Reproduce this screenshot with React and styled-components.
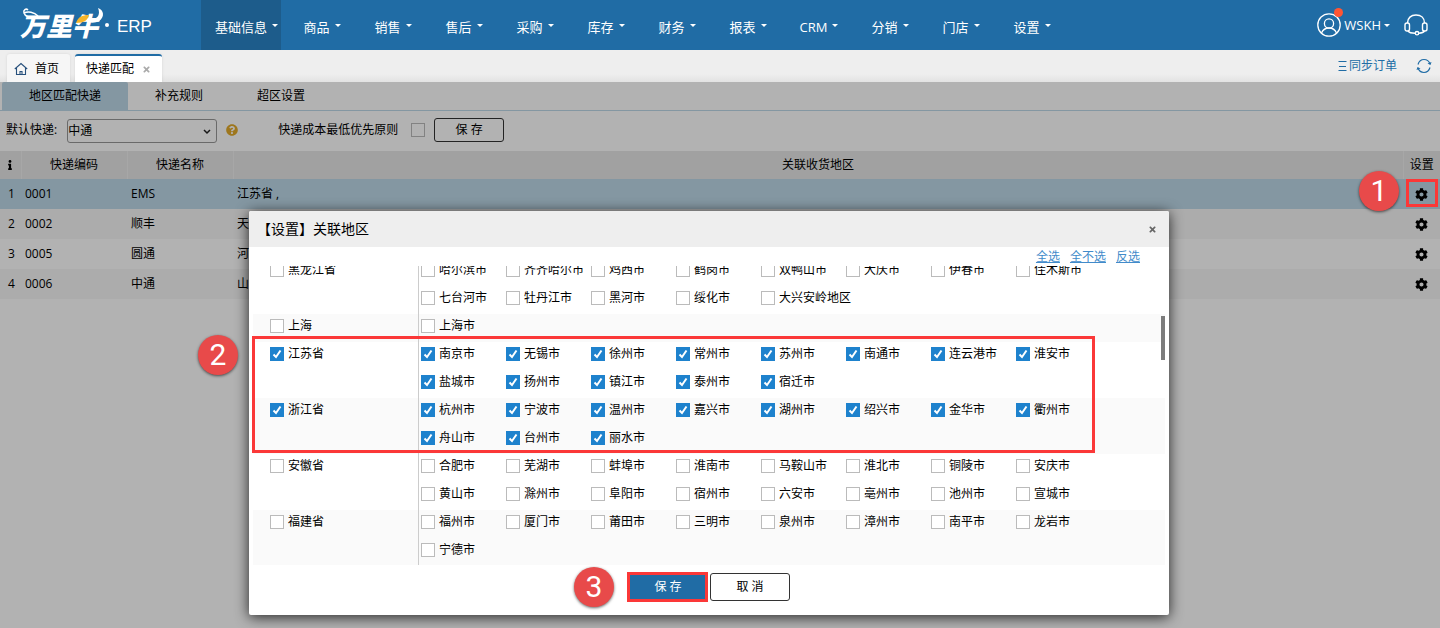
import React, { useEffect, useRef, useState } from "react";
import styled, { createGlobalStyle } from "styled-components";
import { FaCog, FaInfo, FaQuestionCircle, FaTimes } from "react-icons/fa";

function App() {
  return (
    <Page>
      <GlobalStyle />
      <TopBar />
      <PageTabs />

      <Content>
        <SubTabs>
          {subTabs.map((name, i) => (
            <SubTab key={name} $active={i === 0}>
              {name}
            </SubTab>
          ))}
        </SubTabs>
        <Toolbar />
        <ExpressTable />

        <Overlay>
          <AreaDialog />
        </Overlay>
      </Content>
    </Page>
  );
}

export default App;

function TopBar() {
  return (
    <Header>
      <Brand>
        <BrandName>万里牛</BrandName>
        <BrandArt viewBox="0 0 90 32" width="90" height="32">
          <path
            d="M13 10 C9 11 5 9 4 6 C3 3 6 1 8 3 M4 6 C8 4 14 5 18 9"
            fill="none"
            stroke="#fff"
            strokeWidth="1.5"
          />
          <path d="M78 1 C84 3 85 10 79 14 C76 16 71 16 68 15 L70 12 C77 13 81 8 78 1 Z" fill="#fff" />
          <path d="M56 16 C58 10 62 8 69 8 C68 13 64 16 56 16 Z" fill="#f5b52a" />
        </BrandArt>
        <BrandDot />
        <BrandSuffix>ERP</BrandSuffix>
      </Brand>

      <Nav>
        {menus.map((name, i) => (
          <NavItem key={name} $active={i === 0}>
            {name}
            <Caret />
          </NavItem>
        ))}
      </Nav>

      <UserArea>
        <Avatar>
          <svg viewBox="0 0 24 24" width="24" height="24" fill="none" stroke="#fff" strokeWidth="1.3">
            <circle cx="12" cy="12" r="11.2" />
            <circle cx="12" cy="10.5" r="4.6" />
            <path d="M4.5 20 C6 16.5 8.5 15 12 15 C15.500 15 18 16.500 19.500 20" />
          </svg>
          <RedDot />
        </Avatar>
        <UserButton>
          WSKH
          <Caret />
        </UserButton>
        <IconButton aria-label="客服">
          <svg viewBox="0 0 24 24" width="24" height="24" fill="none" stroke="#fff" strokeWidth="1.4">
            <path d="M3.500 10 C3.500 5 7 2 12 2 C17 2 20.500 5 20.500 10" />
            <rect x="1" y="10" width="4.500" height="8" rx="2" />
            <rect x="18.500" y="10" width="4.500" height="8" rx="2" />
            <path d="M4 18 C5 19.500 7 20.200 11 20.200" />
            <circle cx="13" cy="20.200" r="1.700" />
            <path d="M15 20.200 C17.500 20 19.500 19.500 20.500 18" />
          </svg>
        </IconButton>
      </UserArea>
    </Header>
  );
}

function PageTabs() {
  return (
    <TabBar>
      <PageTab>
        <svg viewBox="0 0 14 14" width="14" height="14" fill="none" stroke="#27507c" strokeWidth="1.1">
          <path d="M0.800 7 L7 1.500 L13.200 7 M2.500 6 V12.500 H11.500 V6" />
          <path d="M6 12.500 V9.500 H8 V12.500" />
        </svg>
        首页
      </PageTab>
      <PageTab $active>
        快递匹配
        <FaTimes size={9} color="#aaa" />
      </PageTab>

      <TabTools>
        <SyncButton>
          <svg viewBox="0 0 9 10" width="9" height="10" stroke="#206ca5" strokeWidth="1">
            <path d="M0.500 0.500 H8.500 M1 5.500 H8 M0.500 9.500 H8.500" />
          </svg>
          同步订单
        </SyncButton>
        <IconButton aria-label="刷新">
          <svg viewBox="0 0 16 16" width="16" height="16" fill="none" stroke="#206ca5" strokeWidth="1.200">
            <path d="M2 6.500 C3 3.200 5.300 1.500 8 1.500 C10.800 1.500 13 3 14 6" />
            <path d="M14 9.500 C13 12.800 10.700 14.500 8 14.500 C5.200 14.500 3 13 2 10" />
            <path d="M11.500 5.500 L14.500 7 L15.500 4 Z M4.500 10.500 L1.500 9 L0.500 12 Z" fill="#206ca5" stroke="none" />
          </svg>
        </IconButton>
      </TabTools>
    </TabBar>
  );
}

function Toolbar() {
  return (
    <ToolRow>
      <label htmlFor="default-express">默认快递:</label>
      <SelectWrap>
        <Select id="default-express" defaultValue="中通">
          <option>中通</option>
        </Select>
        <svg viewBox="0 0 8 6" width="8" height="6" fill="none" stroke="#222" strokeWidth="1.500">
          <path d="M1 1 L4 4 L7 1" />
        </svg>
      </SelectWrap>
      <FaQuestionCircle size={12} color="#e2ab2c" />
      <PriorityLabel>
        快递成本最低优先原则
        <Checkbox type="checkbox" />
      </PriorityLabel>
      <Button $small>保 存</Button>
    </ToolRow>
  );
}

function ExpressTable() {
  return (
    <Table>
      <colgroup>
        <col width="21" />
        <col width="106" />
        <col width="106" />
        <col />
        <col width="37" />
      </colgroup>
      <thead>
        <tr>
          <th>
            <FaInfo size={10} />
          </th>
          <th>快递编码</th>
          <th>快递名称</th>
          <th>关联收货地区</th>
          <th>设置</th>
        </tr>
      </thead>
      <tbody>
        {expressList.map((item, i) => (
          <Row key={item.code} $selected={i === 0}>
            <td>{i + 1}</td>
            <td>{item.code}</td>
            <td>{item.name}</td>
            <td>{item.area}</td>
            <SettingCell>
              <IconButton aria-label="设置">
                <FaCog size={13} color="#000" />
              </IconButton>
              {i === 0 && (
                <>
                  <GearFrame />
                  <GearBadge>1</GearBadge>
                </>
              )}
            </SettingCell>
          </Row>
        ))}
      </tbody>
    </Table>
  );
}

function AreaDialog() {
  const listRef = useRef();

  useEffect(() => {
    listRef.current.scrollTop = 8;
  }, []);

  return (
    <Dialog role="dialog" aria-labelledby="dialog-title">
      <DialogHead>
        <h2 id="dialog-title">【设置】关联地区</h2>
        <IconButton aria-label="关闭">
          <FaTimes size={9} color="#666" />
        </IconButton>
      </DialogHead>

      <SelectLinks>
        <a href="#all">全选</a>
        <a href="#none">全不选</a>
        <a href="#invert">反选</a>
      </SelectLinks>

      <AreaList ref={listRef}>
        {areaList.map((item) => (
          <Area item={item} key={item.province} />
        ))}
      </AreaList>
      <ScrollThumb />

      <DialogFoot>
        <FootAction>
          <Button $primary>保 存</Button>
          <SaveFrame />
          <SaveBadge>3</SaveBadge>
        </FootAction>
        <Button>取 消</Button>
      </DialogFoot>

      <AreaFrame />
      <AreaBadge>2</AreaBadge>
    </Dialog>
  );
}

function Area({ item }) {
  return (
    <AreaRow>
      <Province>
        <CheckItem name={item.province} checked={item.checked} />
      </Province>
      <Cities>
        {item.cities.map((city) => (
          <CheckItem name={city} checked={item.checked} key={city} />
        ))}
      </Cities>
    </AreaRow>
  );
}

function CheckItem({ name, checked = false }) {
  const [on, setOn] = useState(checked);

  return (
    <CheckLabel>
      <Checkbox type="checkbox" checked={on} onChange={() => setOn((prev) => !prev)} />
      {name}
    </CheckLabel>
  );
}

const GlobalStyle = createGlobalStyle`
  * {
    box-sizing: border-box;
  }

  body {
    margin: 0;
    color: #000;
    font-family: "Open Sans", "Noto Sans CJK SC", sans-serif;
    font-size: 12px;
    line-height: 16px;
  }

  button, select, input {
    font: inherit;
    color: inherit;
    margin: 0;
  }

  svg {
    flex: none;
    display: block;
  }
`;

const Page = styled.div`
  min-height: 100vh;
  display: flex;
  flex-direction: column;
`;

const Header = styled.header`
  height: 50px;
  display: flex;
  background: #206ca5;
  color: #fff;
`;

const Brand = styled.div`
  position: relative;
  width: 201px;
  flex: none;
  padding-left: 20px;
  display: flex;
  align-items: center;
`;

const BrandName = styled.span`
  width: 85px;
  font-family: "Noto Sans CJK SC", sans-serif;
  font-size: 26px;
  font-weight: 900;
  font-style: italic;
  line-height: 50px;
`;

const BrandArt = styled.svg`
  position: absolute;
  left: 20px;
  top: 7px;
`;

const BrandDot = styled.i`
  width: 4px;
  height: 4px;
  margin-right: 8px;
  border-radius: 50%;
  background: #fff;
`;

const BrandSuffix = styled.span`
  font-family: "Liberation Sans", sans-serif;
  font-size: 17px;
  line-height: 20px;
  padding-top: 4px;
`;

const Nav = styled.nav`
  flex: 1;
  display: flex;
`;

const NavItem = styled.button`
  min-width: ${(p) => (p.$active ? "80px" : "71px")};
  padding: 4px 2px 0 13px;
  display: flex;
  align-items: center;
  justify-content: center;
  gap: 5px;
  border: 0;
  background: ${(p) => (p.$active ? "#1d5c8b" : "transparent")};
  font-size: 13px;
  white-space: nowrap;
  cursor: pointer;
`;

const Caret = styled.i`
  margin-bottom: 4px;
  border: 3px solid transparent;
  border-top-color: #fff;
  border-bottom: 0;
`;

const UserArea = styled.div`
  display: flex;
  align-items: center;
  padding-right: 12px;
`;

const Avatar = styled.div`
  position: relative;
  margin-right: 3px;
`;

const RedDot = styled.i`
  position: absolute;
  top: -5px;
  right: -2px;
  width: 9px;
  height: 9px;
  border-radius: 50%;
  background: #ff5533;
`;

const UserButton = styled.button`
  display: flex;
  align-items: center;
  gap: 3px;
  margin-right: 14px;
  padding: 0;
  border: 0;
  background: none;
  font-size: 13px;

  ${Caret} {
    margin-bottom: 0;
  }
`;

const IconButton = styled.button`
  padding: 0;
  border: 0;
  background: none;
  cursor: pointer;
`;

const TabBar = styled.div`
  height: 32px;
  padding: 4px 8px 0 7px;
  display: flex;
  gap: 5px;
  background: linear-gradient(#eee 75%, #e2e2e2);
`;

const PageTab = styled.button`
  display: flex;
  align-items: center;
  gap: ${(p) => (p.$active ? "8px" : "7px")};
  padding: ${(p) => (p.$active ? "0 11px" : "0 11px 0 7px")};
  border: 0;
  border-top: 2px solid ${(p) => (p.$active ? "#206ca5" : "#f6f6f6")};
  border-radius: 3px 3px 0 0;
  background: ${(p) => (p.$active ? "#fff" : "#f6f6f6")};
  box-shadow: 0 0 3px rgba(0, 0, 0, 0.1);
`;

const TabTools = styled.div`
  margin-left: auto;
  padding-bottom: 4px;
  display: flex;
  align-items: center;
  gap: 19px;
`;

const SyncButton = styled.button`
  display: flex;
  align-items: center;
  gap: 2px;
  padding: 0;
  border: 0;
  background: none;
  color: #206ca5;
`;

const Content = styled.main`
  position: relative;
  flex: 1;
  background: #fff;
`;

const SubTabs = styled.div`
  height: 29px;
  padding-left: 2px;
  display: flex;
  border-bottom: 1px solid #bdd8e9;
`;

const SubTab = styled.button`
  padding: 0 27px;
  border: 0;
  border-radius: 2px 2px 0 0;
  background: ${(p) => (p.$active ? "#bdd8e9" : "none")};
`;

const ToolRow = styled.div`
  height: 40px;
  padding: 0 6px 2px;
  display: flex;
  align-items: center;
`;

const SelectWrap = styled.div`
  position: relative;
  margin: 2px 9px 0 10px;

  svg {
    position: absolute;
    right: 6px;
    top: 10px;
  }
`;

const Select = styled.select`
  display: block;
  width: 150px;
  height: 24px;
  padding: 0;
  border: 1px solid #999;
  border-radius: 3px;
  appearance: none;
  background: transparent;
`;

const PriorityLabel = styled.label`
  display: flex;
  align-items: center;
  gap: 13px;
  margin: 0 9px 0 40px;
`;

const Checkbox = styled.input`
  flex: none;
  width: 14px;
  height: 14px;
  border: 1px solid #bbb;
  appearance: none;
  background: #fff;

  &:checked {
    border-color: #1e82cd;
    background: #1e82cd
      url("data:image/svg+xml,%3Csvg xmlns='http://www.w3.org/2000/svg' viewBox='0 0 12 12'%3E%3Cpath d='M2.500 6.500 L5 9 L9.500 2.500' fill='none' stroke='white' stroke-width='2'/%3E%3C/svg%3E")
      center / 12px 12px no-repeat;
  }
`;

const Button = styled.button`
  width: ${(p) => (p.$small ? "70px" : "80px")};
  height: ${(p) => (p.$small ? "24px" : "28px")};
  padding: 0;
  border: 1px solid ${(p) => (p.$primary ? "#206ca5" : "#333")};
  border-radius: 3px;
  background: ${(p) => (p.$primary ? "#206ca5" : "#fff")};
  color: ${(p) => (p.$primary ? "#fff" : "#000")};
  cursor: pointer;
`;

const Table = styled.table`
  width: 100%;
  table-layout: fixed;
  border-collapse: collapse;

  th {
    height: 28px;
    padding: 0;
    background: #e7e7e7;
    border-right: 1px solid #f0f0f0;
    font-weight: 400;

    svg {
      margin: 0 auto;
    }
  }

  th:last-child {
    border-right: 0;
  }

  td {
    height: 30px;
    padding: 0 4px;
  }

  td:first-child {
    padding: 0 0 0 2px;
    text-align: center;
  }
`;

const Row = styled.tr`
  background: ${(p) => (p.$selected ? "#bdd8e9" : "#fff")};

  &:nth-child(even) {
    background: #f7f7f7;
  }
`;

const SettingCell = styled.td`
  position: relative;

  ${IconButton} {
    display: block;
    margin: 0 auto;
  }
`;

const Frame = styled.span`
  position: absolute;
  z-index: 2;
  border: 3px solid #fb3838;
  pointer-events: none;
`;

const Badge = styled.span`
  position: absolute;
  z-index: 2;
  width: 40px;
  height: 40px;
  border-radius: 50%;
  background: #e84a4a;
  box-shadow: 0 1px 3px rgba(0, 0, 0, 0.6);
  color: #fff;
  font-family: Roboto, sans-serif;
  font-size: 30px;
  line-height: 40px;
  text-align: center;
`;

const GearFrame = styled(Frame)`
  inset: 0 2px 2px 3px;
`;

const GearBadge = styled(Badge)`
  top: -8px;
  right: 41px;
`;

const Overlay = styled.div`
  position: absolute;
  inset: 0;
  z-index: 1;
  display: flex;
  justify-content: center;
  align-items: flex-start;
  padding: 129px 22px 0 0;
  background: rgba(0, 0, 0, 0.3);
`;

const Dialog = styled.section`
  position: relative;
  width: 920px;
  padding-bottom: 14px;
  border-radius: 2px;
  background: #fff;
  box-shadow: 0 2px 14px rgba(0, 0, 0, 0.8);
`;

const DialogHead = styled.div`
  height: 36px;
  padding: 0 12px 0 8px;
  display: flex;
  align-items: center;
  justify-content: space-between;
  border-radius: 2px 2px 0 0;
  background: #eee;

  h2 {
    margin: 0;
    font-size: 14px;
    font-weight: 400;
  }
`;

const SelectLinks = styled.div`
  height: 19px;
  padding: 2px 29px 0 0;
  display: flex;
  justify-content: flex-end;
  gap: 10px;

  a {
    color: #428bca;
  }
`;

const AreaList = styled.div`
  height: 299px;
  margin: 0 4px;
  overflow-y: auto;
  scrollbar-width: none;
`;

const AreaRow = styled.div`
  display: flex;

  &:nth-child(even) {
    background: #fafafa;
  }
`;

const Province = styled.div`
  width: 166px;
  flex: none;
  padding-left: 17px;
  border-right: 1px solid #ccc;
`;

const Cities = styled.div`
  padding-left: 2px;
  display: grid;
  grid-template-columns: repeat(8, 85px);
`;

const CheckLabel = styled.label`
  height: 28px;
  padding-bottom: 4px;
  display: flex;
  align-items: center;
  gap: 4px;
  white-space: nowrap;
`;

const ScrollThumb = styled.i`
  position: absolute;
  top: 105px;
  right: 4px;
  width: 4px;
  height: 44px;
  background: #7c7c7c;
`;

const DialogFoot = styled.div`
  display: flex;
  justify-content: center;
  gap: 2px;
  padding-top: 8px;
`;

const FootAction = styled.div`
  position: relative;
`;

const SaveFrame = styled(Frame)`
  inset: -1px 0 -1px -1px;
`;

const SaveBadge = styled(Badge)`
  top: -6px;
  left: -54px;
`;

const AreaFrame = styled(Frame)`
  top: 125px;
  left: 3px;
  width: 843px;
  height: 117px;
`;

const AreaBadge = styled(Badge)`
  top: 124px;
  left: -51px;
`;

const menus = ["基础信息", "商品", "销售", "售后", "采购", "库存", "财务", "报表", "CRM", "分销", "门店", "设置"];

const subTabs = ["地区匹配快递", "补充规则", "超区设置"];

const expressList = [
  { code: "0001", name: "EMS", area: "江苏省 ," },
  { code: "0002", name: "顺丰", area: "天" },
  { code: "0005", name: "圆通", area: "河" },
  { code: "0006", name: "中通", area: "山" },
];

const areaList = [
  {
    province: "黑龙江省",
    cities: [
      "哈尔滨市",
      "齐齐哈尔市",
      "鸡西市",
      "鹤岗市",
      "双鸭山市",
      "大庆市",
      "伊春市",
      "佳木斯市",
      "七台河市",
      "牡丹江市",
      "黑河市",
      "绥化市",
      "大兴安岭地区",
    ],
  },
  {
    province: "上海",
    cities: ["上海市"],
  },
  {
    province: "江苏省",
    checked: true,
    cities: [
      "南京市",
      "无锡市",
      "徐州市",
      "常州市",
      "苏州市",
      "南通市",
      "连云港市",
      "淮安市",
      "盐城市",
      "扬州市",
      "镇江市",
      "泰州市",
      "宿迁市",
    ],
  },
  {
    province: "浙江省",
    checked: true,
    cities: [
      "杭州市",
      "宁波市",
      "温州市",
      "嘉兴市",
      "湖州市",
      "绍兴市",
      "金华市",
      "衢州市",
      "舟山市",
      "台州市",
      "丽水市",
    ],
  },
  {
    province: "安徽省",
    cities: [
      "合肥市",
      "芜湖市",
      "蚌埠市",
      "淮南市",
      "马鞍山市",
      "淮北市",
      "铜陵市",
      "安庆市",
      "黄山市",
      "滁州市",
      "阜阳市",
      "宿州市",
      "六安市",
      "亳州市",
      "池州市",
      "宣城市",
    ],
  },
  {
    province: "福建省",
    cities: ["福州市", "厦门市", "莆田市", "三明市", "泉州市", "漳州市", "南平市", "龙岩市", "宁德市"],
  },
];
